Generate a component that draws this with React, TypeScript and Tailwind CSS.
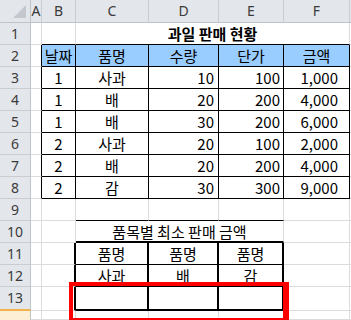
import React from "react";

type E = "g" | "b" | "B" | "n";
type Cell = {
  t?: string;
  span?: 1 | 3 | 4;
  r: E;
  b: E;
  al?: "c" | "d" | "e" | "f";
  bg?: boolean;
  bold?: boolean;
};

const rC: Record<E, string> = {
  g: "border-r border-r-[#dadcdd]",
  b: "border-r border-r-black",
  B: "border-r-2 border-r-black",
  n: "",
};
const bC: Record<E, string> = {
  g: "border-b border-b-[#dadcdd]",
  b: "border-b border-b-black",
  B: "border-b-2 border-b-black",
  n: "",
};
const spanC = { 1: "", 3: "col-span-3", 4: "col-span-4" };
const alC = {
  c: "justify-center",
  d: "justify-end pr-[4px]",
  e: "justify-end pr-[3px]",
  f: "justify-end pr-[11px]",
};

const g = (): Cell => ({ r: "g", b: "g" });
const x = (): Cell => ({ r: "n", b: "g" });

const dataRows: [string, string, string, string, string][] = [
  ["1", "사과", "10", "100", "1,000"],
  ["1", "배", "20", "200", "4,000"],
  ["1", "배", "30", "200", "6,000"],
  ["2", "사과", "20", "100", "2,000"],
  ["2", "배", "20", "200", "4,000"],
  ["2", "감", "30", "300", "9,000"],
];

const rows: Cell[][] = [
  // row 1
  [
    { r: "g", b: "g" },
    { r: "g", b: "b" },
    { t: "과일 판매 현황", span: 4, r: "g", b: "b", al: "c", bold: true },
    x(),
  ],
  // row 2
  [
    { r: "b", b: "g" },
    ...["날짜", "품명", "수량", "단가", "금액"].map(
      (t): Cell => ({ t, r: "b", b: "b", al: "c", bg: true })
    ),
    x(),
  ],
  // rows 3-8
  ...dataRows.map((d): Cell[] => [
    { r: "b", b: "g" },
    { t: d[0], r: "b", b: "b", al: "c" },
    { t: d[1], r: "b", b: "b", al: "c" },
    { t: d[2], r: "b", b: "b", al: "d" },
    { t: d[3], r: "b", b: "b", al: "e" },
    { t: d[4], r: "b", b: "b", al: "f" },
    x(),
  ]),
  // row 9
  [g(), g(), { r: "g", b: "b" }, { r: "g", b: "b" }, { r: "g", b: "b" }, g(), x()],
  // row 10
  [
    g(),
    g(),
    { t: "품목별 최소 판매 금액", span: 3, r: "g", b: "B", al: "c" },
    g(),
    x(),
  ],
  // row 11
  [
    g(),
    { r: "B", b: "g" },
    { t: "품명", r: "B", b: "b", al: "c" },
    { t: "품명", r: "B", b: "b", al: "c" },
    { t: "품명", r: "B", b: "b", al: "c" },
    g(),
    x(),
  ],
  // row 12
  [
    g(),
    { r: "B", b: "g" },
    { t: "사과", r: "B", b: "B", al: "c" },
    { t: "배", r: "B", b: "B", al: "c" },
    { t: "감", r: "B", b: "B", al: "c" },
    g(),
    x(),
  ],
  // row 13
  [
    g(),
    { r: "B", b: "g" },
    { r: "B", b: "B" },
    { r: "B", b: "B" },
    { r: "B", b: "B" },
    g(),
    x(),
  ],
  // row 14
  [g(), g(), g(), g(), g(), g(), x()],
];

const hdr =
  "flex items-center justify-center bg-[#e3e6ea] text-[14px] text-[#3b3b3b] leading-none";

export default function App() {
  return (
    <div
      className="relative w-[351px] h-[320px] overflow-hidden bg-white"
      style={{ fontFamily: '"Noto Sans", "Noto Sans CJK KR", sans-serif' }}
    >
      <div className="grid h-full grid-cols-[31px_11px_34px_73px_70px_65px_66px_1fr] grid-rows-[23px_repeat(12,22px)_24px_1fr]">
        {/* column header */}
        <div className="relative bg-[#e3e6ea] border-r border-r-[#bfc4ca] border-b border-b-[#bfc4ca]">
          <svg width="30" height="22" className="absolute left-0 top-0">
            <polygon points="26,5 26,18 13,18" fill="#c4c8ce" />
          </svg>
        </div>
        {["A", "B", "C", "D", "E", "F", ""].map((l, i) => (
          <div
            key={i}
            className={`${hdr} border-b border-b-[#bfc4ca] ${
              i < 6 ? "border-r border-r-[#c9cdd2]" : ""
            }`}
          >
            {l}
          </div>
        ))}
        {rows.map((row, ri) => (
          <React.Fragment key={ri}>
            <div
              className={`${hdr} border-r border-r-[#bfc4ca] ${
                ri === 12
                  ? "border-b-2 border-b-[#f1b44c]"
                  : ri === 13
                  ? "bg-[#fcefd6]"
                  : "border-b border-b-[#c9cdd2]"
              }`}
            >
              {ri < 13 ? ri + 1 : ""}
            </div>
            {row.map((c, ci) => (
              <div
                key={ci}
                className={`flex items-center text-[15px] leading-none text-black whitespace-nowrap ${
                  rC[c.r]
                } ${bC[c.b]} ${spanC[c.span ?? 1]} ${c.al ? alC[c.al] : ""} ${
                  c.bg ? "bg-[#99ccff]" : ""
                } ${c.bold ? "font-bold" : ""}`}
                style={{ fontFamily: '"Noto Sans CJK KR", "Noto Sans", sans-serif' }}
              >
                {c.t}
              </div>
            ))}
          </React.Fragment>
        ))}
      </div>
      <div className="absolute left-[69px] top-[282px] w-[220px] h-[40px] border-[4px] border-r-[6px] border-[#ff0000]" />
    </div>
  );
}
